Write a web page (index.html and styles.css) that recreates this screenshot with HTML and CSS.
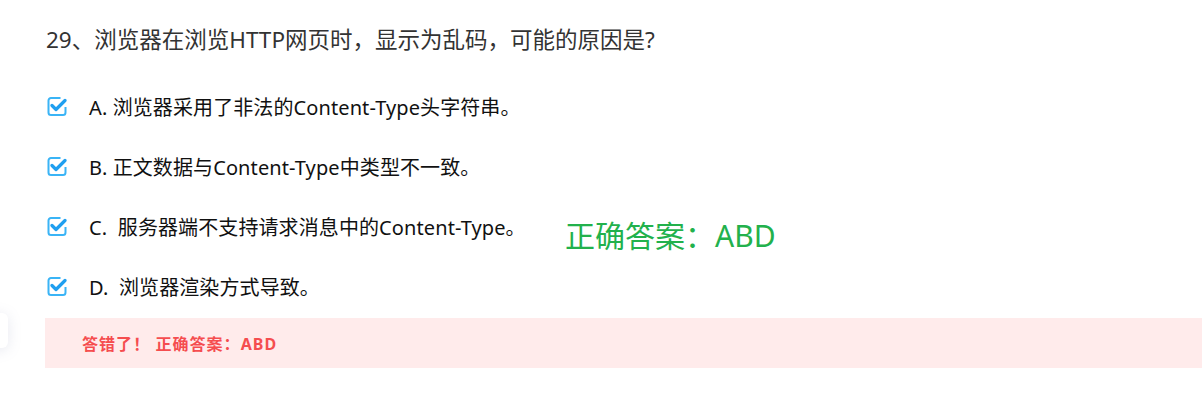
FILE: index.html
```html
<!DOCTYPE html>
<html lang="zh-CN">
<head>
<meta charset="utf-8">
<link rel="stylesheet" href="styles.css">
</head>
<body>
<div class="side-card"></div>
<div class="page">
  <h2 class="question">29、浏览器在浏览HTTP网页时，显示为乱码，可能的原因是?</h2>
  <div class="body">
    <ul class="options">
      <li class="option">
        <svg class="check" viewBox="0 0 20 20" width="20" height="20"><path d="M13.5 2H4A2.5 2.5 0 0 0 1.5 4.5v12A2.5 2.5 0 0 0 4 19h12a2.5 2.5 0 0 0 2.5-2.5V11" fill="none" stroke="#3ab4f6" stroke-width="2"/><path d="M5 9.5l4 4L18 4.5" fill="none" stroke="#1f9ff0" stroke-width="3.2" stroke-linecap="round" stroke-linejoin="round"/></svg>
        <span class="label">A. 浏览器采用了非法的Content-Type头字符串。</span>
      </li>
      <li class="option">
        <svg class="check" viewBox="0 0 20 20" width="20" height="20"><path d="M13.5 2H4A2.5 2.5 0 0 0 1.5 4.5v12A2.5 2.5 0 0 0 4 19h12a2.5 2.5 0 0 0 2.5-2.5V11" fill="none" stroke="#3ab4f6" stroke-width="2"/><path d="M5 9.5l4 4L18 4.5" fill="none" stroke="#1f9ff0" stroke-width="3.2" stroke-linecap="round" stroke-linejoin="round"/></svg>
        <span class="label">B. 正文数据与Content-Type中类型不一致。</span>
      </li>
      <li class="option">
        <svg class="check" viewBox="0 0 20 20" width="20" height="20"><path d="M13.5 2H4A2.5 2.5 0 0 0 1.5 4.5v12A2.5 2.5 0 0 0 4 19h12a2.5 2.5 0 0 0 2.5-2.5V11" fill="none" stroke="#3ab4f6" stroke-width="2"/><path d="M5 9.5l4 4L18 4.5" fill="none" stroke="#1f9ff0" stroke-width="3.2" stroke-linecap="round" stroke-linejoin="round"/></svg>
        <span class="label">C.&nbsp; 服务器端不支持请求消息中的Content-Type。</span>
      </li>
      <li class="option">
        <svg class="check" viewBox="0 0 20 20" width="20" height="20"><path d="M13.5 2H4A2.5 2.5 0 0 0 1.5 4.5v12A2.5 2.5 0 0 0 4 19h12a2.5 2.5 0 0 0 2.5-2.5V11" fill="none" stroke="#3ab4f6" stroke-width="2"/><path d="M5 9.5l4 4L18 4.5" fill="none" stroke="#1f9ff0" stroke-width="3.2" stroke-linecap="round" stroke-linejoin="round"/></svg>
        <span class="label">D.&nbsp; 浏览器渲染方式导致。</span>
      </li>
    </ul>
    <div class="answer">正确答案：ABD</div>
  </div>
  <div class="result">答错了！ 正确答案：ABD</div>
</div>
</body>
</html>
```
FILE: styles.css
```css
html, body {
  margin: 0;
  padding: 0;
  background: #fff;
}
body {
  font-family: "Noto Sans", "Noto Sans CJK SC", sans-serif;
  color: #333;
  width: 1202px;
  height: 401px;
  overflow: hidden;
  position: relative;
}
.side-card {
  position: absolute;
  left: -20px;
  top: 313px;
  width: 28px;
  height: 35px;
  background: #fff;
  border-radius: 6px;
  box-shadow: 0 2px 14px rgba(120, 130, 170, 0.18);
}
.question {
  margin: 0;
  padding: 26px 0 0 46px;
  font-size: 22.5px;
  line-height: 28px;
  font-weight: 400;
  color: #333;
}
.body {
  display: flex;
  margin-top: 22px;
}
.options {
  list-style: none;
  margin: 0;
  padding: 0 0 0 47px;
  width: 518px;
}
.option {
  height: 60px;
  display: flex;
  align-items: center;
  gap: 22px;
}
.check {
  flex: none;
  display: block;
}
.label {
  font-size: 20px;
  letter-spacing: 0.1px;
  color: #111;
  white-space: nowrap;
}
.answer {
  margin-top: 142px;
  font-size: 30px;
  line-height: 36px;
  color: #22b14c;
  white-space: nowrap;
}
.result {
  margin: 2px 0 0 45px;
  height: 50px;
  display: flex;
  align-items: center;
  padding-left: 37px;
  background: #ffebeb;
  color: #f54d4f;
  font-size: 16px;
  font-weight: 700;
  letter-spacing: 1.05px;
}
```
